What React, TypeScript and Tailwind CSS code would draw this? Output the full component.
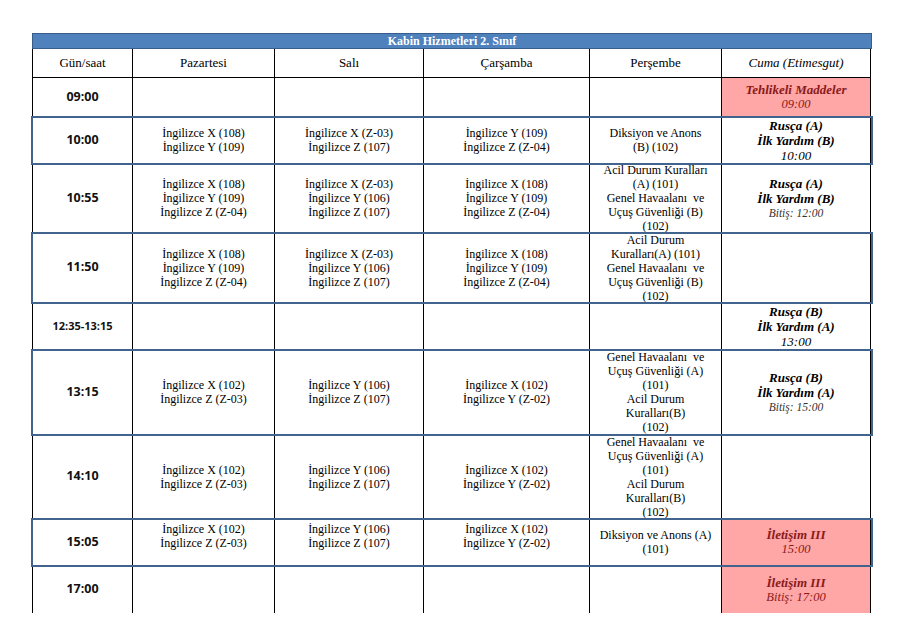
import React from "react";

type Line = { t: string; k?: "n" | "b" | "bi" | "i" | "sub" | "rb" | "ri" };
type Cell = { lines?: Line[]; pink?: boolean; cls?: string };
type Row = { time: string; h: string; blue?: boolean; small?: boolean; last?: boolean; cells: Cell[] };

const n = (...ts: string[]): Line[] => ts.map((t) => ({ t }));

const cuma = (a: string, b: string, c: string, sub: boolean): Cell => ({
  lines: [
    { t: a, k: "bi" },
    { t: b, k: "bi" },
    { t: c, k: sub ? "sub" : "i" },
  ],
});

const perA = n("Acil Durum Kuralları", "(A) (101)", "Genel Havaalanı  ve", "Uçuş Güvenliği (B)", "(102)");
const perB = n("Acil Durum", "Kuralları(A) (101)", "Genel Havaalanı  ve", "Uçuş Güvenliği (B)", "(102)");
const perC = n("Genel Havaalanı  ve", "Uçuş Güvenliği (A)", "(101)", "Acil Durum", "Kuralları(B)", "(102)");

const rows: Row[] = [
  {
    time: "09:00",
    h: "h-[39px]",
    cells: [
      {},
      {},
      {},
      {},
      {
        pink: true,
        lines: [
          { t: "Tehlikeli Maddeler", k: "rb" },
          { t: "09:00", k: "ri" },
        ],
      },
    ],
  },
  {
    time: "10:00",
    h: "h-[47px]",
    blue: true,
    cells: [
      { lines: n("İngilizce X (108)", "İngilizce Y (109)") },
      { lines: n("İngilizce X (Z-03)", "İngilizce Z (107)") },
      { lines: n("İngilizce Y (109)", "İngilizce Z (Z-04)") },
      { lines: n("Diksiyon ve Anons", "(B) (102)") },
      cuma("Rusça (A)", "İlk Yardım (B)", "10:00", false),
    ],
  },
  {
    time: "10:55",
    h: "h-[69px]",
    cells: [
      { lines: n("İngilizce X (108)", "İngilizce Y (109)", "İngilizce Z (Z-04)") },
      { lines: n("İngilizce X (Z-03)", "İngilizce Y (106)", "İngilizce Z (107)") },
      { lines: n("İngilizce X (108)", "İngilizce Y (109)", "İngilizce Z (Z-04)") },
      { lines: perA },
      cuma("Rusça (A)", "İlk Yardım (B)", "Bitiş: 12:00", true),
    ],
  },
  {
    time: "11:50",
    h: "h-[70px]",
    blue: true,
    cells: [
      { lines: n("İngilizce X (108)", "İngilizce Y (109)", "İngilizce Z (Z-04)") },
      { lines: n("İngilizce X (Z-03)", "İngilizce Y (106)", "İngilizce Z (107)") },
      { lines: n("İngilizce X (108)", "İngilizce Y (109)", "İngilizce Z (Z-04)") },
      { lines: perB },
      {},
    ],
  },
  {
    time: "12:35-13:15",
    h: "h-[47px]",
    small: true,
    cells: [{}, {}, {}, {}, cuma("Rusça (B)", "İlk Yardım (A)", "13:00", false)],
  },
  {
    time: "13:15",
    h: "h-[85px]",
    blue: true,
    cells: [
      { lines: n("İngilizce X (102)", "İngilizce Z (Z-03)") },
      { lines: n("İngilizce Y (106)", "İngilizce Z (107)") },
      { lines: n("İngilizce X (102)", "İngilizce Y (Z-02)") },
      { lines: perC },
      cuma("Rusça (B)", "İlk Yardım (A)", "Bitiş: 15:00", true),
    ],
  },
  {
    time: "14:10",
    h: "h-[84px]",
    cells: [
      { lines: n("İngilizce X (102)", "İngilizce Z (Z-03)") },
      { lines: n("İngilizce Y (106)", "İngilizce Z (107)") },
      { lines: n("İngilizce X (102)", "İngilizce Y (Z-02)") },
      { lines: perC },
      {},
    ],
  },
  {
    time: "15:05",
    h: "h-[47px]",
    blue: true,
    cells: [
      { lines: n("İngilizce X (102)", "İngilizce Z (Z-03)"), cls: "pb-[13px]" },
      { lines: n("İngilizce Y (106)", "İngilizce Z (107)"), cls: "pb-[13px]" },
      { lines: n("İngilizce X (102)", "İngilizce Y (Z-02)"), cls: "pb-[13px]" },
      { lines: n("Diksiyon ve Anons (A)", "(101)") },
      {
        pink: true,
        lines: [
          { t: "İletişim III", k: "rb" },
          { t: "15:00", k: "ri" },
        ],
      },
    ],
  },
  {
    time: "17:00",
    h: "h-[47px]",
    last: true,
    cells: [
      {},
      {},
      {},
      {},
      {
        pink: true,
        lines: [
          { t: "İletişim III", k: "rb" },
          { t: "Bitiş: 17:00", k: "ri" },
        ],
      },
    ],
  },
];

const grid = "grid grid-cols-[101px_142px_149px_166px_132px_149px]";

function LineEl({ l }: { l: Line }) {
  switch (l.k) {
    case "b":
      return <div className="font-bold">{l.t}</div>;
    case "bi":
      return <div className="font-bold italic text-[13px] leading-[15px]">{l.t}</div>;
    case "i":
      return <div className="italic text-[13px] leading-[15px]">{l.t}</div>;
    case "sub":
      return <div className="italic text-[11.5px] leading-[14px] text-[#333]">{l.t}</div>;
    case "rb":
      return <div className="font-bold italic text-[13px] leading-[15px] text-[#8a1a1a]">{l.t}</div>;
    case "ri":
      return <div className="italic text-[12.5px] leading-[15px] text-[#8a1a1a]">{l.t}</div>;
    default:
      return <div className="whitespace-pre">{l.t}</div>;
  }
}

function CellEl({ c, last }: { c: Cell; last?: boolean }) {
  return (
    <div
      className={
        "flex flex-col items-center justify-center overflow-hidden border-r border-black text-center text-[12px] leading-[14px] text-black " +
        (last ? "" : "border-b ") +
        (c.pink ? "bg-[#ffa6a6] " : "bg-white ") +
        (c.cls ?? "")
      }
    >
      {c.lines?.map((l, i) => <LineEl key={i} l={l} />)}
    </div>
  );
}

export default function App() {
  return (
    <div
      className="min-h-[635px] w-[903px] bg-white pl-[32px] pt-[33px]"
      style={{ fontFamily: '"Liberation Serif", "Times New Roman", serif' }}
    >
      <div className="w-[840px]">
        <div className="flex h-[16px] items-center justify-center border border-[#385d8a] bg-[#4f81bd] text-[12px] font-bold leading-[14px] text-white">
          Kabin Hizmetleri 2. Sınıf
        </div>
        <div className={grid + " h-[29px]"}>
          <div className="flex items-center justify-center border-l border-r border-b border-black text-[13px]">
            Gün/saat
          </div>
          <div className="flex items-center justify-center border-r border-b border-black text-[13px]">Pazartesi</div>
          <div className="flex items-center justify-center border-r border-b border-black text-[13px]">Salı</div>
          <div className="flex items-center justify-center border-r border-b border-black text-[13px]">Çarşamba</div>
          <div className="flex items-center justify-center border-r border-b border-black text-[13px]">Perşembe</div>
          <div className="flex items-center justify-center border-r border-b border-black text-[13px] italic">
            Cuma (Etimesgut)
          </div>
        </div>
        {rows.map((r, i) => (
          <div
            key={i}
            className={
              grid +
              " " +
              r.h +
              (r.blue ? " relative z-10 outline-2 outline-solid outline-offset-[-1px] outline-[#41648f]" : "")
            }
          >
            <div
              className={
                "flex items-center justify-center border-l border-r border-black font-bold text-[#111] " +
                (r.last ? "" : "border-b ") +
                (r.small ? "text-[11px]" : "text-[12.5px]")
              }
              style={{ fontFamily: '"Open Sans", "Liberation Sans", sans-serif' }}
            >
              {r.time}
            </div>
            {r.cells.map((c, j) => (
              <CellEl key={j} c={c} last={r.last} />
            ))}
          </div>
        ))}
      </div>
    </div>
  );
}
